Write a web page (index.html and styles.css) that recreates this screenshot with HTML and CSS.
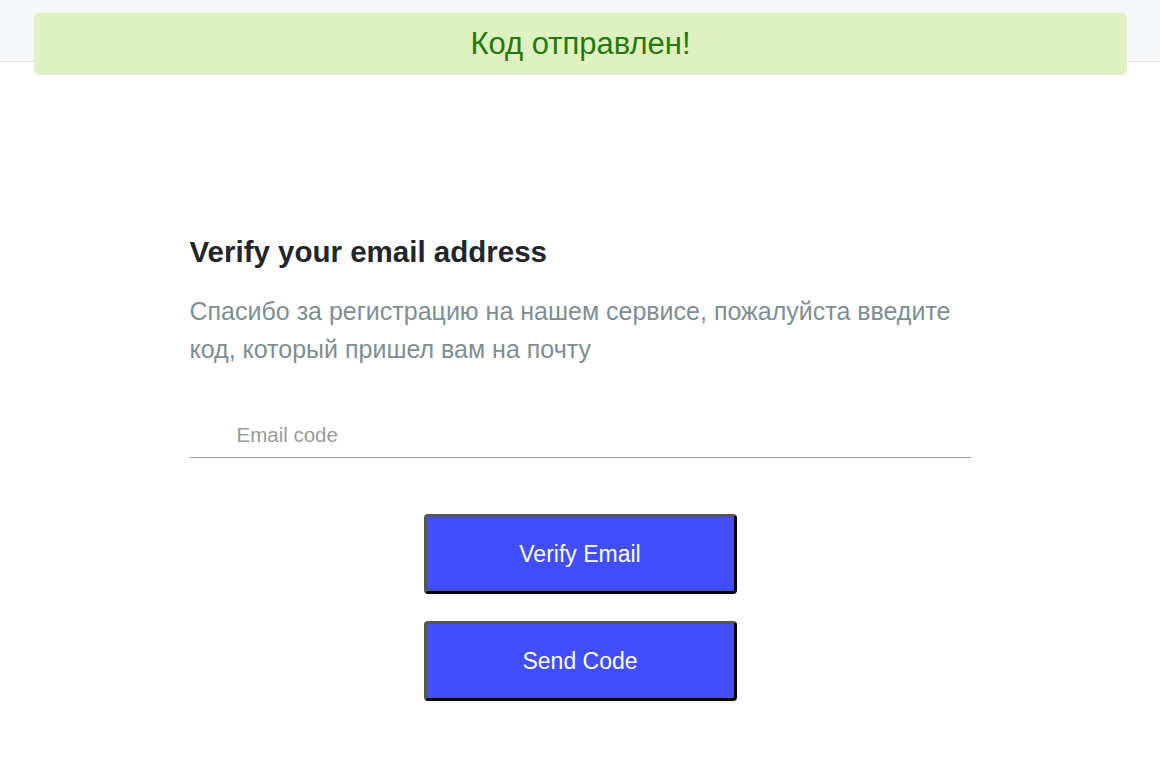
FILE: index.html
```html
<!DOCTYPE html>
<html lang="ru">
<head>
<meta charset="utf-8">
<title>Verify email</title>
<link rel="stylesheet" href="styles.css">
</head>
<body>
<header class="topbar"></header>
<div class="toast">Код отправлен!</div>
<main class="verify">
  <h1 class="verify-title">Verify your email address</h1>
  <p class="verify-text">Спасибо за регистрацию на нашем сервисе, пожалуйста введите код, который пришел вам на почту</p>
  <div class="field">
    <input class="field-input" type="text" placeholder="Email code">
  </div>
  <div class="actions">
    <button class="btn" type="button">Verify Email</button>
    <button class="btn" type="button">Send Code</button>
  </div>
</main>
</body>
</html>
```
FILE: styles.css
```css
* { box-sizing: border-box; }
html, body { margin: 0; padding: 0; background: #fff; }
body {
  font-family: "Liberation Sans", Arial, sans-serif;
  position: relative;
  min-height: 768px;
}
.topbar {
  height: 62px;
  background: #f5f6f8;
  border-bottom: 1px solid #e4e6ea;
}
.toast {
  position: absolute;
  top: 13px;
  left: 34px;
  right: 33px;
  height: 62px;
  background: #e0f1c1;
  border-radius: 5px;
  color: #237a0c;
  font-size: 31px;
  display: flex;
  align-items: center;
  justify-content: center;
}
.verify {
  width: 781px;
  margin: 0 auto;
  padding-top: 172px;
}
.verify-title {
  margin: 0;
  font-size: 29.5px;
  font-weight: 700;
  color: #22262a;
  line-height: 36px;
}
.verify-text {
  margin: 22px 0 0;
  font-size: 25px;
  line-height: 38px;
  color: #808e92;
}
.field {
  margin-top: 45px;
  border-bottom: 1px solid #9a9a9a;
}
.field-input {
  display: block;
  width: 100%;
  border: 0;
  outline: none;
  background: transparent;
  height: 44px;
  padding: 0 0 0 47px;
  font-family: inherit;
  font-size: 20.5px;
  color: #333;
}
.field-input::placeholder { color: #9a9a9a; }
.actions {
  margin-top: 56px;
  display: flex;
  flex-direction: column;
  align-items: center;
  gap: 27px;
}
.btn {
  width: 313px;
  height: 80px;
  background: #414efd;
  border: 3px solid;
  border-color: #555 #000 #000 #555;
  border-radius: 4px;
  color: #fff;
  font-family: inherit;
  font-size: 23px;
  cursor: pointer;
}
```
